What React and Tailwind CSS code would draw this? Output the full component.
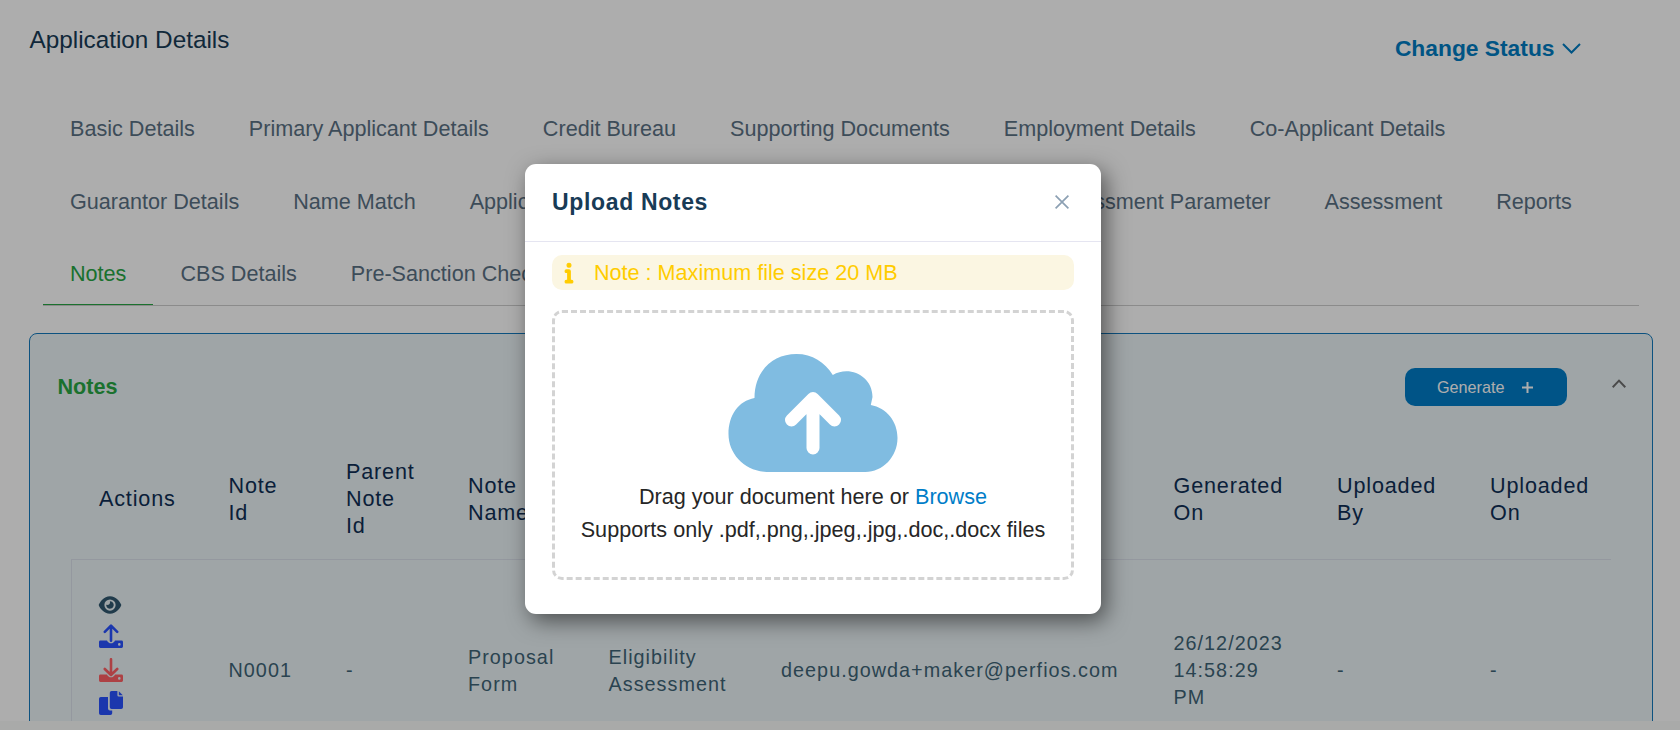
import React from "react";
import { FaEye, FaInfo } from "react-icons/fa6";

function Tab({ children, active, className = "" }) {
  return (
    <div
      className={`h-[73px] shrink-0 whitespace-nowrap px-[27px] pt-[26px] text-[21.6px] leading-[32px] ${
        active ? "border-b border-[#28a745] text-[#28a745]" : "text-[#5a7184]"
      } ${className}`}
    >
      {children}
    </div>
  );
}

function DriveIcon({ down, className }) {
  return (
    <svg viewBox="0 0 24 24" className={className} fill="currentColor">
      <path d="M1.4 16.5H8C8.8 18.4 10.3 19.3 12 19.3S15.2 18.4 16 16.5H22.6Q24 16.5 24 17.9V22.6Q24 24 22.6 24H1.4Q0 24 0 22.6V17.9Q0 16.5 1.4 16.5ZM20.3 19.1A1.3 1.3 0 1 0 20.3 21.7A1.3 1.3 0 1 0 20.3 19.1Z" fillRule="evenodd" />
      <path
        d={down ? "M12 1.2V16.4M5.8 11L12 17L18.2 11" : "M12 16.8V2M5.8 7.8L12 1.6L18.2 7.8"}
        fill="none"
        stroke="currentColor"
        strokeWidth="2.6"
        strokeLinecap="round"
        strokeLinejoin="round"
      />
    </svg>
  );
}

function CopyIcon({ className }) {
  return (
    <svg viewBox="0 0 24 24" className={className} fill="currentColor">
      <path d="M12.6 0H18.4V4.2Q18.4 5.6 19.8 5.6H24V16.2Q24 18 22.2 18H12.6Q10.8 18 10.8 16.2V1.8Q10.8 0 12.6 0Z" />
      <path d="M19.8 0.2L23.8 4.2H19.8Z" />
      <path d="M1.8 6H9V17.6Q9 19.6 11 19.6H13.2V22.2Q13.2 24 11.4 24H1.8Q0 24 0 22.2V7.8Q0 6 1.8 6Z" />
    </svg>
  );
}

function HeadCell({ lines }) {
  return (
    <div className="flex flex-col justify-center pl-[27px] text-[21.6px] leading-[27px] tracking-[0.83px] text-[#0f2f55]">
      {lines.map((l) => (
        <span key={l}>{l}</span>
      ))}
    </div>
  );
}

function Cell({ lines }) {
  return (
    <div className="flex flex-col justify-center pb-px pl-[27px] text-[19.8px] leading-[27px] tracking-[1.03px] text-[#3e6476]">
      {lines.map((l) => (
        <span key={l}>{l}</span>
      ))}
    </div>
  );
}

const cols =
  "grid grid-cols-[129.5px_117.5px_122px_140.5px_172.5px_392.5px_163.5px_153px_148px]";

export default function App() {
  return (
    <div className="relative h-[730px] w-[1680px] overflow-hidden bg-white font-['Liberation_Sans',Arial,sans-serif]">
      <div className="flex h-[721px] flex-col overflow-hidden">
        <header className="flex h-[86px] shrink-0 items-start justify-between pl-[29.5px] pr-[99px]">
          <h1 className="pt-6 text-[24.3px] leading-8 text-[#183b56]">Application Details</h1>
          <button className="flex items-center gap-[7.5px] pt-8 text-[22.8px] font-bold leading-8 text-[#007dc3]">
            Change Status
            <svg viewBox="0 0 19 11" className="h-[11px] w-[19px]" fill="none" stroke="currentColor" strokeWidth="2">
              <path d="M1 1L9.5 9.5L18 1" />
            </svg>
          </button>
        </header>

        <nav className="ml-[43px] flex h-[220px] w-[1596px] shrink-0 flex-col border-b border-[#cdcdcd]">
          <div className="flex h-[73px] pt-px">
            <Tab>Basic Details</Tab>
            <Tab>Primary Applicant Details</Tab>
            <Tab>Credit Bureau</Tab>
            <Tab>Supporting Documents</Tab>
            <Tab>Employment Details</Tab>
            <Tab>Co-Applicant Details</Tab>
          </div>
          <div className="flex h-[73px] pt-px">
            <Tab>Guarantor Details</Tab>
            <Tab>Name Match</Tab>
            <Tab className="w-[576.5px]">Application Match</Tab>
            <Tab>Assessment Parameter</Tab>
            <Tab>Assessment</Tab>
            <Tab>Reports</Tab>
          </div>
          <div className="flex h-[73px]">
            <Tab active>Notes</Tab>
            <Tab>CBS Details</Tab>
            <Tab>Pre-Sanction Checklist</Tab>
          </div>
        </nav>

        <section className="ml-[29px] mt-[27px] h-[460px] w-[1624px] shrink-0 rounded-t-lg border border-[#147abd] bg-[#ebf4f7]">
          <div className="flex h-[104px] items-start pl-[27.5px] pr-[26px]">
            <h2 className="flex-1 pt-[37px] text-[21.6px] font-bold leading-8 text-[#28a745]">Notes</h2>
            <button className="mt-[34px] flex h-[38px] w-[162px] items-center rounded-[10px] bg-[#007dc8] pl-8 text-[16.2px] text-white">
              Generate
              <svg viewBox="0 0 11 11" className="ml-[17px] h-[11px] w-[11px]" stroke="currentColor" strokeWidth="2">
                <path d="M5.5 0V11M0 5.5H11" />
              </svg>
            </button>
            <svg viewBox="0 0 14 9" className="ml-[45px] mt-[45px] h-[9px] w-[14px] text-[#6e6e6e]" fill="none" stroke="currentColor" strokeWidth="2">
              <path d="M0.7 8.2L7 1.6L13.3 8.2" />
            </svg>
          </div>

          <div className="ml-[41px] w-[1540px]">
            <div className={`${cols} h-[121px] border-l border-transparent`}>
              <HeadCell lines={["Actions"]} />
              <HeadCell lines={["Note", "Id"]} />
              <HeadCell lines={["Parent", "Note", "Id"]} />
              <HeadCell lines={["Note", "Name"]} />
              <HeadCell lines={["Note", "Type"]} />
              <HeadCell lines={["Generated", "By"]} />
              <HeadCell lines={["Generated", "On"]} />
              <HeadCell lines={["Uploaded", "By"]} />
              <HeadCell lines={["Uploaded", "On"]} />
            </div>
            <div className={`${cols} h-[223px] border-l border-t border-[#dbe0ea]`}>
              <div className="flex flex-col pl-[27px] pt-[35px]">
                <FaEye className="ml-[-1px] h-[20px] w-[24px] text-[#30586f]" />
                <DriveIcon className="mt-[9px] h-[24px] w-[24px] text-[#2951ff]" />
                <DriveIcon down className="mt-[9.5px] h-[24px] w-[24px] text-[#ff6065]" />
                <CopyIcon className="mt-[9px] h-[24px] w-[24px] text-[#2951ff]" />
              </div>
              <Cell lines={["N0001"]} />
              <Cell lines={["-"]} />
              <Cell lines={["Proposal", "Form"]} />
              <Cell lines={["Eligibility", "Assessment"]} />
              <Cell lines={["deepu.gowda+maker@perfios.com"]} />
              <Cell lines={["26/12/2023", "14:58:29", "PM"]} />
              <Cell lines={["-"]} />
              <Cell lines={["-"]} />
            </div>
          </div>
        </section>
      </div>
      <div className="h-[9px] bg-[#f9fbf9]" />

      <div className="absolute inset-0 bg-black/32 pl-[525px] pt-[164px]">
        <div className="h-[450px] w-[576px] rounded-[11px] bg-white shadow-[5px_7px_22px_rgba(0,0,0,0.52)]">
          <div className="flex h-[78px] items-center justify-between border-b border-[#e5e5f1] pl-[27px] pr-8">
            <h3 className="pb-[2px] text-[23px] font-bold leading-8 tracking-[0.65px] text-[#183b56]">Upload Notes</h3>
            <svg viewBox="0 0 14 14" className="mb-px h-[14px] w-[14px] text-[#8ca0b3]" fill="none" stroke="currentColor" strokeWidth="1.7">
              <path d="M0.6 0.6L13.4 13.4M13.4 0.6L0.6 13.4" />
            </svg>
          </div>
          <div className="mx-[27px] mt-[13px] flex h-[35px] items-center rounded-[10px] bg-[#fbf6e2] text-[21.6px] text-[#ffcc00]">
            <FaInfo className="ml-[10px] h-[21px] w-[14px] overflow-visible" stroke="currentColor" strokeWidth={26} />
            <span className="ml-[18px] pt-px">Note : Maximum file size 20 MB</span>
          </div>
          <div className="mx-[27px] mt-5 flex h-[270px] flex-col items-center rounded-[10px] border-3 border-dashed border-[#d3d3d3] pt-[41px]">
            <svg viewBox="-0.5 0 169 118" className="mr-px h-[118px] w-[169px] shrink-0 overflow-visible">
              <path d="M38 118C16 117 0 100 0 80C0 61 10 47 26 44C26 17 44 0 68 0C84 0 96 8 104.3 21C121 11 144 22 144 43L142.3 51C158 54 169 67 169 84C169 103 154 118 137 118Z" fill="#80bce1" />
              <path d="M84.5 94V46M63 66L84.5 44.5L106 66" fill="none" stroke="#fff" strokeWidth="13" strokeLinecap="round" strokeLinejoin="round" />
            </svg>
            <div className="mt-2 text-center text-[21.6px] leading-[33px] text-[#262626]">
              <p>
                Drag your document here or <span className="text-[#007dc8]">Browse</span>
              </p>
              <p>Supports only .pdf,.png,.jpeg,.jpg,.doc,.docx files</p>
            </div>
          </div>
        </div>
      </div>
    </div>
  );
}
